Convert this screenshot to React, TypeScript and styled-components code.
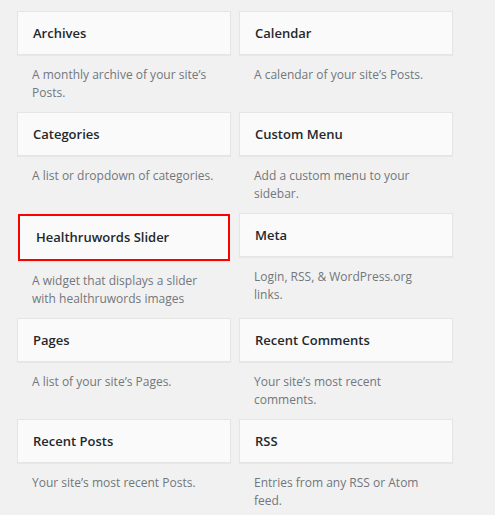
import React from 'react'
import styled, { createGlobalStyle } from 'styled-components'

const GlobalStyle = createGlobalStyle`
  html, body {
    margin: 0;
    padding: 0;
    background: #f1f1f1;
    font-family: 'Open Sans', 'Noto Sans', sans-serif;
  }
`

type WidgetItem = {
  title: string
  description: string
  highlight?: boolean
}

const widgets: WidgetItem[] = [
  { title: 'Archives', description: 'A monthly archive of your site’s Posts.' },
  { title: 'Calendar', description: 'A calendar of your site’s Posts.' },
  { title: 'Categories', description: 'A list or dropdown of categories.' },
  { title: 'Custom Menu', description: 'Add a custom menu to your sidebar.' },
  {
    title: 'Healthruwords Slider',
    description: 'A widget that displays a slider with healthruwords images',
    highlight: true,
  },
  { title: 'Meta', description: 'Login, RSS, & WordPress.org links.' },
  { title: 'Pages', description: 'A list of your site’s Pages.' },
  { title: 'Recent Comments', description: 'Your site’s most recent comments.' },
  { title: 'Recent Posts', description: 'Your site’s most recent Posts.' },
  { title: 'RSS', description: 'Entries from any RSS or Atom feed.' },
]

const WidgetList = styled.div`
  display: grid;
  grid-template-columns: 214px 214px;
  column-gap: 8px;
  row-gap: 10px;
  padding: 11px 0 0 17px;
`

const Widget = styled.div`
  display: flex;
  flex-direction: column;
`

const WidgetTop = styled.div<{ $highlight?: boolean }>`
  display: flex;
  align-items: center;
  box-sizing: border-box;
  height: ${(p) => (p.$highlight ? '47px' : '44px')};
  margin: ${(p) => (p.$highlight ? '1px 1px 0' : '0')};
  padding: 0 ${(p) => (p.$highlight ? '16px' : '15px')};
  background: #fafafa;
  border: ${(p) => (p.$highlight ? '2px solid #ff0000' : '1px solid #e5e5e5')};
  box-shadow: 0 1px 1px rgba(0, 0, 0, 0.04);
`

const WidgetTitle = styled.h3`
  margin: 0;
  font-size: 13px;
  font-weight: 600;
  line-height: 1;
  color: #23282d;
`

const WidgetDescription = styled.div`
  padding: 11px 15px 0;
  font-size: 12px;
  line-height: 18px;
  color: #72777c;
`

export default function App() {
  return (
    <>
      <GlobalStyle />
      <WidgetList>
        {widgets.map((w) => (
          <Widget key={w.title}>
            <WidgetTop $highlight={w.highlight}>
              <WidgetTitle>{w.title}</WidgetTitle>
            </WidgetTop>
            <WidgetDescription>{w.description}</WidgetDescription>
          </Widget>
        ))}
      </WidgetList>
    </>
  )
}
